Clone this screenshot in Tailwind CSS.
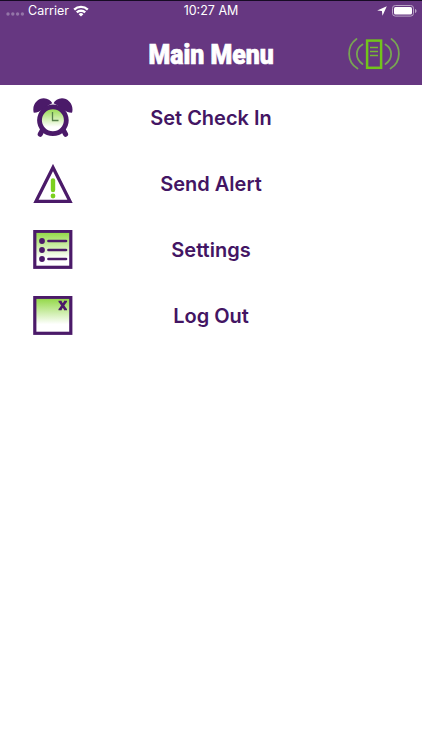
<!DOCTYPE html>
<html lang="en">

<head>
    <meta charset="UTF-8">
    <meta name="viewport" content="width=device-width, initial-scale=1.0">
    <title>Main Menu</title>
    <script src="https://cdn.jsdelivr.net/npm/@tailwindcss/browser@4"></script>
</head>

<body class="min-h-screen bg-white font-['Inter',sans-serif]">
    <header class="h-[85px] bg-[#663781] border-t border-[#170b24] text-white flex flex-col">
        <!-- status bar -->
        <div class="h-5 grid grid-cols-3 items-center text-[12.5px] leading-5">
            <div class="flex items-center pl-[6px]">
                <svg class="w-[19px] h-[4px] mt-[5px] mr-[3px]" viewBox="0 0 19 4" fill="#9476a8">
                    <circle cx="2" cy="2" r="1.7" />
                    <circle cx="6.8" cy="2" r="1.7" />
                    <circle cx="11.6" cy="2" r="1.7" />
                    <circle cx="16.4" cy="2" r="1.7" />
                </svg>
                <span>Carrier</span>
                <svg class="w-[16px] h-[12px] ml-1 -mt-[1px]" viewBox="0 0 16 12" fill="none" stroke="#fff" stroke-width="2.4">
                    <path d="M1.2 4.6a9.8 9.8 0 0 1 13.6 0" />
                    <path d="M3.8 7.4a6 6 0 0 1 8.4 0" />
                    <path d="M8 11.5 5.6 9.2a3.4 3.4 0 0 1 4.8 0z" fill="#fff" stroke="none" />
                </svg>
            </div>
            <span class="text-center">10:27 AM</span>
            <div class="flex items-center justify-end pr-[5px] gap-[5px] -mt-[1px]">
                <svg class="w-[10px] h-[10px]" viewBox="0 0 10 10" fill="#fff">
                    <path d="M9.8.2 5.5 9.800 4.900 5.100 .2 4.500z" />
                </svg>
                <svg class="w-[25px] h-[12px]" viewBox="0 0 25 12">
                    <rect x=".5" y=".5" width="21" height="10.6" rx="2.8" fill="none" stroke="#b9a4c6" />
                    <rect x="2" y="2" width="18" height="7.6" rx="1.5" fill="#fff" />
                    <path d="M23 4v4c1-.4 1.5-1.1 1.5-2S24 4.400 23 4z" fill="#b9a4c6" />
                </svg>
            </div>
        </div>
        <!-- title bar -->
        <div class="flex-1 grid grid-cols-[1fr_auto_1fr] items-center">
            <h1 class="col-start-2 pt-[4px] font-['Roboto',sans-serif] font-black text-[27px] leading-none whitespace-nowrap scale-x-[0.92] [-webkit-text-stroke:0.7px_#fff]">Main Menu</h1>
            <svg class="justify-self-end mr-[21px] mt-[1px] w-[54px] h-[34px]" viewBox="0 0 54 34" fill="none">
                <g stroke="#78a552" stroke-width="1.8" stroke-linecap="round">
                    <path d="M9.500 2C-.5 9-.5 25 10.500 31.500" />
                    <path d="M15.500 7.500C8 12 8 22 15.500 27" />
                    <path d="M38.500 7.500C46 12 46 22 38.500 27" />
                    <path d="M44.500 2C54.500 9 54.500 25 43.500 31.500" />
                </g>
                <rect x="20.100" y="3.600" width="14" height="27.200" stroke="#72c41b" stroke-width="2.500" />
                <path d="M23 10.500h8M23 14.500h8M23 18.500h8" stroke="#78b735" stroke-width="1.500" />
            </svg>
        </div>
    </header>

    <svg class="absolute w-0 h-0">
        <defs>
            <linearGradient id="green" x1="0" y1="0" x2="0" y2="1">
                <stop offset="0" stop-color="#8ed73f" />
                <stop offset=".75" stop-color="#ffffff" />
            </linearGradient>
        </defs>
    </svg>

    <!-- menu -->
    <nav class="flex flex-col text-[#431563] font-semibold text-[20px]">
        <a class="h-[66px] grid grid-cols-[106px_1fr_106px] items-center text-center">
            <svg class="w-10 h-10 ml-[33px]" viewBox="0 0 40 40" fill="#4b1a69">
                <path d="M.8 14.800C-1.500 7 4.500 .3 10.800 .3c4 0 7 2.200 8.500 4.900C12.500 8 8 14.800 .8 14.800z" />
                <path d="M39 14.800C41.300 7 35.300 .3 29 .3c-4 0-7 2.200-8.500 4.900C27.300 8 31.800 14.800 39 14.800z" />
                <path d="M9.500 32 7.200 36.300M30.300 32l2.300 4.300" stroke="#4b1a69" stroke-width="5" stroke-linecap="round" />
                <circle cx="19.900" cy="22.300" r="13.400" fill="url(#green)" stroke="#4b1a69" stroke-width="4.800" />
                <path d="M19.500 14v8.500h6" fill="none" stroke="#55804a" stroke-width="1.300" />
            </svg>
            <span>Set Check In</span>
        </a>
        <a class="h-[66px] grid grid-cols-[106px_1fr_106px] items-center text-center">
            <svg class="w-10 h-10 ml-[33px]" viewBox="0 0 40 40" fill="none">
                <path d="M20 3.500 37 37.300H3z" stroke="#4b1a69" stroke-width="3.300" />
                <path d="M20 16.500v9.500" stroke="#7bd01e" stroke-width="4.400" stroke-linecap="round" />
                <circle cx="20" cy="32" r="2.400" fill="#7bd01e" />
            </svg>
            <span>Send Alert</span>
        </a>
        <a class="h-[66px] grid grid-cols-[106px_1fr_106px] items-center text-center">
            <svg class="w-10 h-10 ml-[33px]" viewBox="0 0 40 40">
                <rect x="1.800" y="1.300" width="36" height="36" fill="url(#green)" stroke="#4b1a69" stroke-width="3.200" />
                <g fill="#4b1a69">
                    <circle cx="9" cy="11" r="2.900" />
                    <circle cx="9" cy="20" r="2.900" />
                    <circle cx="9" cy="29" r="2.900" />
                </g>
                <path d="M15.500 11h17.500M15.500 20h17.500M15.500 29h17.500" stroke="#4b1a69" stroke-width="2.700" stroke-linecap="round" />
            </svg>
            <span>Settings</span>
        </a>
        <a class="h-[66px] grid grid-cols-[106px_1fr_106px] items-center text-center">
            <svg class="w-10 h-10 ml-[33px]" viewBox="0 0 40 40">
                <rect x="1.800" y="1.300" width="36" height="36" fill="url(#green)" stroke="#4b1a69" stroke-width="3.200" />
                <path d="m27 5.500 5.500 8M32.500 5.500 27 13.500" stroke="#4b1a69" stroke-width="2.700" />
                <path d="M25.500 5.500h3M31 5.500h3M25.500 13.500h3M31 13.500h3" stroke="#4b1a69" stroke-width="1.600" />
            </svg>
            <span>Log Out</span>
        </a>
    </nav>
</body>

</html>
